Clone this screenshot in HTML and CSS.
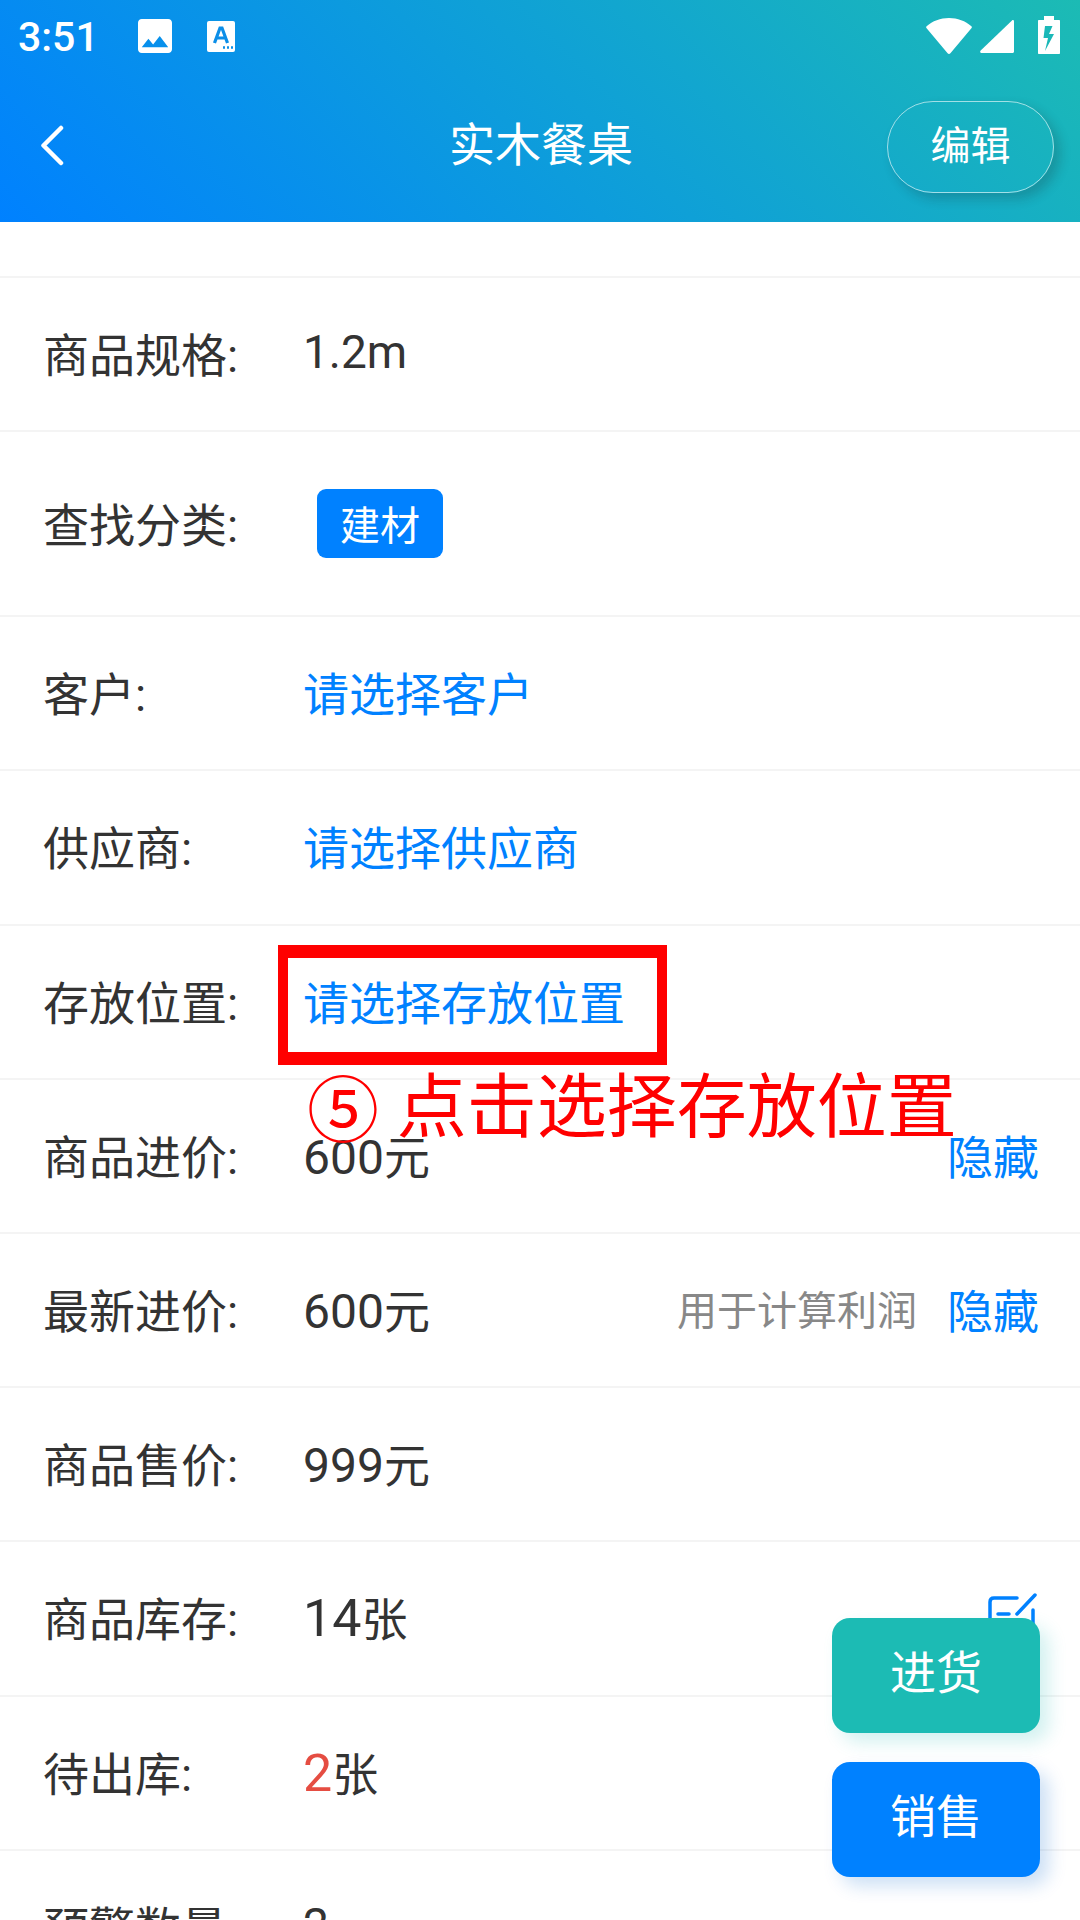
FILE: index.html
```html
<!DOCTYPE html>
<html lang="zh-CN">
<head>
<meta charset="utf-8">
<title>实木餐桌</title>
<link rel="stylesheet" href="styles.css">
</head>
<body>
<div class="screen">
  <header class="header">
    <div class="status">
      <span class="time">3:51</span>
      <svg class="ic-image" viewBox="3 3 18 18"><path fill="#fff" fill-rule="evenodd" d="M21 19V5c0-1.1-.9-2-2-2H5c-1.1 0-2 .9-2 2v14c0 1.1.9 2 2 2h14c1.1 0 2-.9 2-2zM8.500 13.500l2.500 3.010L14.500 12l4.500 6H5l3.500-4.500z"/></svg>
      <svg class="ic-a" viewBox="0 0 28 31"><rect width="28" height="31" rx="2" fill="#fff"/><path d="M7.500 22 13 7h2l5.500 15M9.500 17h9" fill="none" stroke="#0b8ee8" stroke-width="3.200"/><path d="M16 26.500h2M20 26.500h2M24 26.500h2" stroke="#0b8ee8" stroke-width="2.400"/></svg>
      <span class="status-fill"></span>
      <svg class="ic-wifi" viewBox="0 0 46 36"><path fill="#fff" d="M.6 8.300C6.500 3 14.500 0 23 0s16.500 3 22.400 8.300c.6.500.6 1.100.2 1.600L24.400 35.300c-.7.900-2.100.9-2.800 0L.4 9.900c-.4-.5-.4-1.100.2-1.600z"/></svg>
      <svg class="ic-signal" viewBox="0 0 34 33"><path fill="#fff" d="M32 .4 .7 30.600C-.3 31.600.2 33 1.500 33H32.500c.9 0 1.500-.6 1.500-1.500V1.200C34 .2 32.800-.3 32 .4z"/></svg>
      <svg class="ic-battery" viewBox="0 0 22 38"><path fill="#fff" fill-rule="evenodd" d="M6 0h10v4h5c.6 0 1 .4 1 1v32c0 .6-.4 1-1 1H1c-.6 0-1-.4-1-1V5c0-.6.4-1 1-1h5zM7 10l-1.500 12H10L7 35l9-17h-5l3.500-8z"/></svg>
    </div>
    <nav class="nav">
      <div class="nav-left">
        <svg class="ic-back" viewBox="0 0 24 41"><path d="M21 3 3.500 20.500 21 38" fill="none" stroke="#fff" stroke-width="4.500" stroke-linecap="round" stroke-linejoin="round"/></svg>
      </div>
      <div class="nav-title">实木餐桌</div>
      <div class="nav-right"><span class="edit-btn"><span class="edit-label">编辑</span></span></div>
    </nav>
  </header>

  <main class="list">
    <div class="strip"></div>
    <div class="row"><span class="label">商品规格:</span><span class="value">1.2m</span></div>
    <div class="row row-tall"><span class="label">查找分类:</span><span class="tag">建材</span></div>
    <div class="row"><span class="label">客户:</span><span class="value link">请选择客户</span></div>
    <div class="row"><span class="label">供应商:</span><span class="value link">请选择供应商</span></div>
    <div class="row"><span class="label">存放位置:</span><span class="value link">请选择存放位置</span></div>
    <div class="row"><span class="label">商品进价:</span><span class="value"><span class="price">600</span>元</span><span class="link">隐藏</span></div>
    <div class="row"><span class="label">最新进价:</span><span class="value"><span class="price">600</span>元</span><span class="hint">用于计算利润</span><span class="link">隐藏</span></div>
    <div class="row"><span class="label">商品售价:</span><span class="value"><span class="price">999</span>元</span></div>
    <div class="row"><span class="label">商品库存:</span><span class="value"><span class="qty">14</span>张</span>
      <svg class="ic-edit" viewBox="0 0 50 50"><path d="M29 5H6Q2 5 2 9V42Q2 46 6 46H41Q45 46 45 42V17" fill="none" stroke="#0081ff" stroke-width="3.500" stroke-linecap="round"/><path d="M10 21H21M29 21 47 2" fill="none" stroke="#0081ff" stroke-width="3.500" stroke-linecap="round"/></svg>
    </div>
    <div class="row"><span class="label">待出库:</span><span class="value"><span class="qty alert">2</span>张</span></div>
    <div class="row"><span class="label">预警数量:</span><span class="value">2</span></div>
  </main>

  <div class="mark-box"></div>
  <div class="mark-text"><span class="mark-num">⑤</span> 点击选择存放位置</div>

  <div class="fabs">
    <div class="fab fab-green"><span class="fab-label">进货</span></div>
    <div class="fab fab-blue"><span class="fab-label">销售</span></div>
  </div>
</div>
</body>
</html>
```

FILE: styles.css
```css
* { box-sizing: border-box; }
html, body { margin: 0; padding: 0; background: #fff; }
body { font-family: Roboto, "Noto Sans CJK SC", sans-serif; color: #333; }

.screen { position: relative; width: 1080px; height: 1920px; overflow: hidden; background: #fff; }

.header { height: 222px; background: linear-gradient(45deg, #0081ff, #1cbbb4); color: #fff; }

.status { height: 72px; display: flex; align-items: center; padding: 0 20px 0 18px; }
.time { font-size: 41px; line-height: 1; width: 77px; font-weight: 500; margin-top: 3px; }
.ic-image { width: 34px; height: 34px; margin-left: 43px; }
.ic-a { width: 28px; height: 31px; margin-left: 35px; }
.status-fill { flex: 1; }
.ic-wifi { width: 46px; height: 36px; }
.ic-signal { width: 34px; height: 33px; margin-left: 8px; }
.ic-battery { width: 22px; height: 38px; margin-left: 24px; margin-top: -2px; }

.nav { height: 150px; display: grid; grid-template-columns: 1fr auto 1fr; align-items: center; }
.nav-left { padding-left: 40px; display: flex; }
.ic-back { width: 24px; height: 41px; margin-top: -3px; }
.nav-title { font-size: 46px; text-align: center; padding: 0 0 12px 2px; }
.nav-right { display: flex; justify-content: flex-end; padding-right: 26px; }
.edit-btn { width: 167px; height: 92px; display: flex; align-items: center; justify-content: center; font-size: 40px; border: 1px solid rgba(255, 255, 255, .6); border-radius: 46px; box-shadow: 6px 6px 12px rgba(26, 26, 26, .2); }
.edit-label { padding-bottom: 8px; }

.strip { height: 56px; border-bottom: 2px solid #f4f4f4; }
.row { height: 154.2px; display: flex; align-items: center; padding: 0 41px 4px 43px; border-bottom: 2px solid #f4f4f4; font-size: 46px; }
.row-tall { height: 185px; }
.label { width: 260px; flex: none; }
.value { flex: 1; }
.price { font-size: 48px; }
.qty { font-size: 52px; }
.link { color: #0081ff; }
.hint { font-size: 40px; color: #888; margin-right: 30px; }
.alert { color: #e54d42; }
.tag { margin: 3px 0 0 14px; width: 126px; height: 69px; display: flex; align-items: center; justify-content: center; background: #0081ff; color: #fff; font-size: 40px; border-radius: 9px; }
.ic-edit { width: 50px; height: 50px; margin: 4px 1px 0 0; }

.mark-box { position: absolute; left: 278px; top: 945px; width: 389px; height: 120px; border: solid #f00; border-width: 13px 10px; }
.mark-text { position: absolute; left: 307px; top: 1052px; font-size: 70px; line-height: 100px; color: #f00; white-space: nowrap; font-family: "Noto Sans CJK SC", sans-serif; }
.mark-num { font-size: 72px; margin-right: 2px; vertical-align: -4px; }

.fabs { position: absolute; left: 832px; top: 1618px; display: flex; flex-direction: column; gap: 29px; }
.fab { width: 208px; height: 115px; display: flex; align-items: center; justify-content: center; color: #fff; font-size: 46px; border-radius: 18px; }
.fab-label { padding-bottom: 14px; }
.fab-green { background: #1cbbb4; box-shadow: 9px 9px 18px rgba(28, 187, 180, .2); }
.fab-blue { background: #0081ff; box-shadow: 9px 9px 18px rgba(0, 102, 204, .2); }
```
